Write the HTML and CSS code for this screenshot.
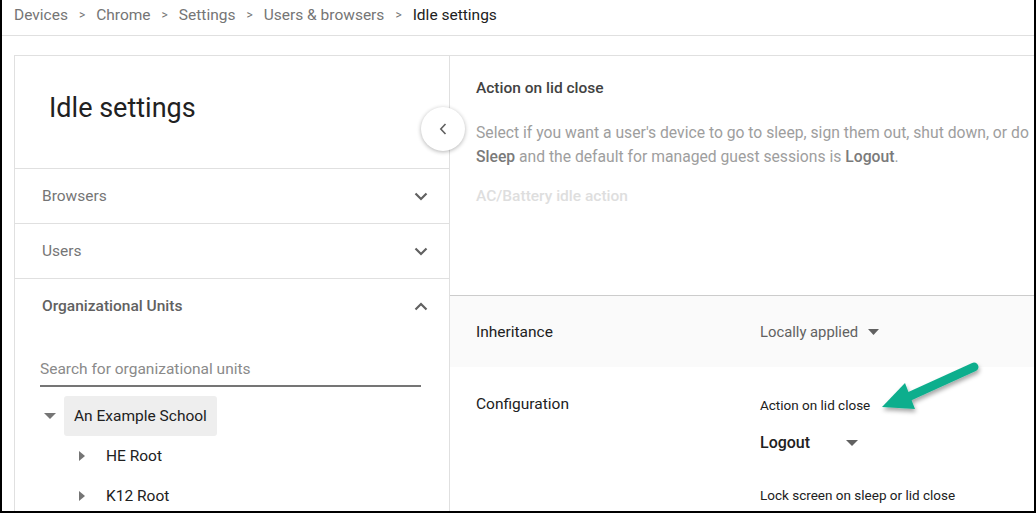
FILE: index.html
```html
<!doctype html>
<html>
<head>
    <title>Idle settings</title>
    <link rel="stylesheet" href="styles.css">
</head>
<body>
    <div class="frame">
        <nav class="crumbs">
            <span class="crumb">Devices</span>
            <span class="sep">&gt;</span>
            <span class="crumb">Chrome</span>
            <span class="sep">&gt;</span>
            <span class="crumb">Settings</span>
            <span class="sep">&gt;</span>
            <span class="crumb">Users &amp; browsers</span>
            <span class="sep">&gt;</span>
            <span class="crumb current">Idle settings</span>
        </nav>

        <div class="card">
            <aside class="side">
                <div class="side-title">
                    <h1>Idle settings</h1>
                </div>
                <div class="acc-row">
                    <span>Browsers</span>
                    <svg class="chev" width="14" height="9" viewBox="0 0 14 9"><path d="M1.5 1.5 L7 7 L12.5 1.5" fill="none" stroke="#616161" stroke-width="2.2"/></svg>
                </div>
                <div class="acc-row">
                    <span>Users</span>
                    <svg class="chev" width="14" height="9" viewBox="0 0 14 9"><path d="M1.5 1.5 L7 7 L12.5 1.5" fill="none" stroke="#616161" stroke-width="2.2"/></svg>
                </div>
                <div class="acc-row open">
                    <span>Organizational Units</span>
                    <svg class="chev" width="14" height="9" viewBox="0 0 14 9"><path d="M1.5 7.5 L7 2 L12.5 7.5" fill="none" stroke="#616161" stroke-width="2.2"/></svg>
                </div>
                <div class="ou">
                    <div class="search">Search for organizational units</div>
                    <div class="tree">
                        <div class="node">
                            <span class="toggle"><svg width="12" height="6" viewBox="0 0 12 6"><path d="M0 0 H12 L6 6 Z" fill="#757575"/></svg></span>
                            <span class="label selected">An Example School</span>
                        </div>
                        <div class="node child">
                            <span class="toggle"><svg width="6" height="10" viewBox="0 0 6 10"><path d="M0 0 L6 5 L0 10 Z" fill="#757575"/></svg></span>
                            <span class="label">HE Root</span>
                        </div>
                        <div class="node child">
                            <span class="toggle"><svg width="6" height="10" viewBox="0 0 6 10"><path d="M0 0 L6 5 L0 10 Z" fill="#757575"/></svg></span>
                            <span class="label">K12 Root</span>
                        </div>
                    </div>
                </div>
                <button class="collapse">
                    <svg width="8" height="12" viewBox="0 0 8 12"><path d="M6.5 1 L1.8 6 L6.5 11" fill="none" stroke="#616161" stroke-width="1.6"/></svg>
                </button>
            </aside>

            <main class="detail">
                <div class="intro">
                    <h2>Action on lid close</h2>
                    <p class="desc">Select if you want a user's device to go to sleep, sign them out, shut down, or do<br><b>Sleep</b> and the default for managed guest sessions is <b>Logout</b>.</p>
                    <h3>AC/Battery idle action</h3>
                </div>
                <div class="setting-row inherit">
                    <div class="setting-name">Inheritance</div>
                    <div class="setting-value">
                        <span class="select muted">Locally applied
                            <svg width="11" height="6" viewBox="0 0 11 6"><path d="M0 0 H11 L5.5 6 Z" fill="#616161"/></svg>
                        </span>
                    </div>
                </div>
                <div class="setting-row config">
                    <div class="setting-name">Configuration</div>
                    <div class="setting-value">
                        <div class="field-label">Action on lid close</div>
                        <span class="select strong">Logout
                            <svg width="12" height="6" viewBox="0 0 12 6"><path d="M0 0 H12 L6 6 Z" fill="#616161"/></svg>
                        </span>
                        <div class="field-label lock">Lock screen on sleep or lid close</div>
                    </div>
                </div>
            </main>
        </div>

        <!-- annotation arrow -->
        <svg class="pointer" width="120" height="70" viewBox="0 0 120 70">
            <defs>
                <filter id="sh" x="-20%" y="-20%" width="140%" height="160%">
                    <feDropShadow dx="1" dy="3" stdDeviation="2" flood-color="#000" flood-opacity="0.35"/>
                </filter>
            </defs>
            <g filter="url(#sh)">
                <line x1="106" y1="12" x2="40" y2="42" stroke="#10ae8d" stroke-width="9" stroke-linecap="round"/>
                <path d="M14 52 L37 28 L47 54 Z" fill="#10ae8d"/>
            </g>
        </svg>
    </div>
</body>
</html>
```

FILE: styles.css
```css
body {
    margin: 0;
    font-family: Roboto, 'Liberation Sans', sans-serif;
}
.frame {
    position: relative;
    width: 1036px;
    height: 513px;
    box-sizing: border-box;
    border-left: 2px solid #000000;
    border-right: 2px solid #000000;
    border-bottom: 2px solid #000000;
    overflow: hidden;
    background-color: #ffffff;
}
.crumbs {
    display: flex;
    align-items: center;
    height: 22px;
    padding: 4px 0 9px 12px;
    line-height: 22px;
    border-bottom: 1px solid #e0e0e0;
    font-size: 15.5px;
    color: #757575;
    white-space: nowrap;
}
.sep {
    font-size: 12px;
    margin: 0 11px;
    color: #757575;
}
.crumb.current {
    color: #212121;
}
.card {
    display: flex;
    width: 1200px;
    margin: 19px 0 0 12px;
    border: 1px solid #e0e0e0;
    border-right: none;
    height: 500px;
}
.side {
    position: relative;
    width: 434px;
    flex-shrink: 0;
    border-right: 1px solid #e0e0e0;
}
.side-title {
    height: 112px;
    display: flex;
    align-items: center;
    padding-left: 34px;
    border-bottom: 1px solid #e0e0e0;
}
.side-title h1 {
    margin: 0 0 8px 0;
    font-size: 27px;
    font-weight: 400;
    color: #212121;
}
.acc-row {
    display: flex;
    align-items: center;
    justify-content: space-between;
    height: 54px;
    padding: 0 21px 0 27px;
    border-bottom: 1px solid #e0e0e0;
    font-size: 15.5px;
    color: #757575;
}
.acc-row.open {
    border-bottom: none;
    font-weight: 500;
    color: #616161;
}
.ou {
    padding: 0 28px 0 25px;
}
.search {
    margin-top: 24px;
    line-height: 24px;
    padding-bottom: 4px;
    border-bottom: 2px solid #757575;
    font-size: 15.5px;
    color: #8a8a8a;
}
.tree {
    margin-top: 9px;
}
.node {
    display: flex;
    align-items: center;
    height: 40px;
}
.toggle {
    display: flex;
    align-items: center;
    justify-content: center;
    width: 20px;
    margin-right: 4px;
}
.node.child {
    padding-left: 30px;
}
.node.child .toggle {
    width: 24px;
    margin-right: 2px;
}
.label {
    display: flex;
    align-items: center;
    height: 40px;
    padding: 0 10px;
    border-radius: 3px;
    font-size: 15.5px;
    color: #212121;
}
.label.selected {
    background-color: #eeeeee;
}
.collapse {
    position: absolute;
    top: 51px;
    right: -16px;
    width: 44px;
    height: 44px;
    border-radius: 50%;
    border: none;
    background-color: #ffffff;
    box-shadow: 0 1px 4px rgba(0, 0, 0, 0.3);
    display: flex;
    align-items: center;
    justify-content: center;
    padding: 0;
    z-index: 2;
}
.detail {
    flex: 1;
}
.intro {
    height: 240px;
    box-sizing: border-box;
    padding: 20px 0 0 26px;
    border-bottom: 1px solid #cccccc;
    white-space: nowrap;
}
.intro h2 {
    margin: 0;
    line-height: 24px;
    font-size: 15.5px;
    font-weight: 500;
    color: #424242;
}
.desc {
    margin: 21px 0 0 0;
    line-height: 24px;
    font-size: 15.7px;
    color: #9e9e9e;
}
.desc b {
    font-weight: 500;
    color: #7a7a7a;
}
.intro h3 {
    margin: 15px 0 0 0;
    line-height: 24px;
    font-size: 15.5px;
    font-weight: 500;
    color: #dedede;
}
.setting-row {
    display: flex;
    padding-left: 26px;
    font-size: 15.5px;
}
.setting-name {
    width: 284px;
    line-height: 24px;
    color: #212121;
}
.setting-row.inherit {
    height: 71px;
    align-items: center;
    background-color: #fafafa;
}
.setting-row.config {
    padding-top: 25px;
}
.select {
    display: inline-flex;
    align-items: center;
    gap: 10px;
    line-height: 24px;
}
.select.muted {
    font-size: 14.8px;
    color: #616161;
}
.select.strong {
    margin-top: 16px;
    font-size: 16px;
    font-weight: 500;
    color: #212121;
    gap: 36px;
}
.field-label {
    margin-top: 3px;
    font-size: 13.5px;
    line-height: 20px;
    color: #212121;
}
.field-label.lock {
    margin-top: 30px;
}
.pointer {
    position: absolute;
    left: 866px;
    top: 355px;
}
```
